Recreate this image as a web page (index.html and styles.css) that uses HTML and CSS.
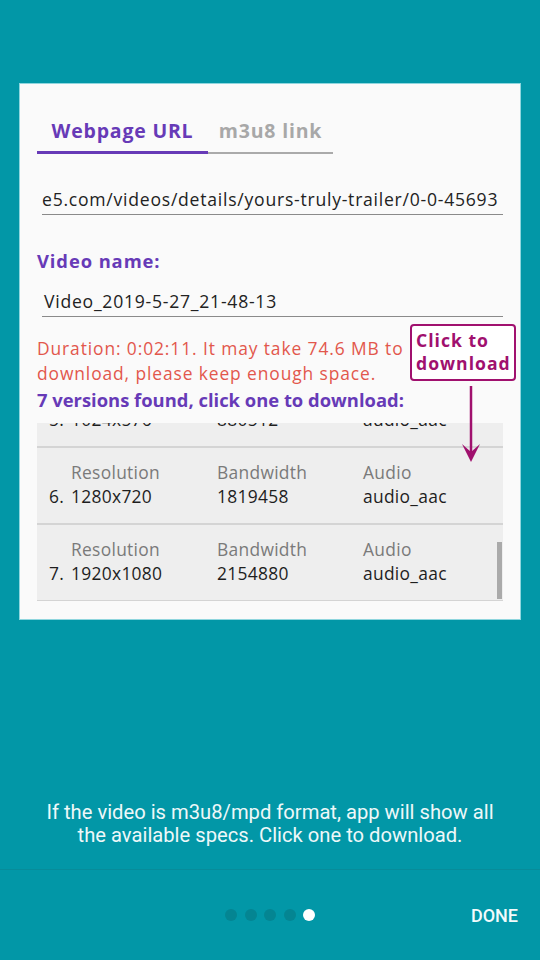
FILE: index.html
```html
<!DOCTYPE html>
<html lang="en">
<head>
  <meta charset="UTF-8">
  <title>Intro - Download specs</title>
  <link rel="stylesheet" href="styles.css">
</head>
<body>
  <div class="stage">
    <div class="shot">
      <!-- Tabs -->
      <div class="tabs">
        <div class="tab active">Webpage URL</div>
        <div class="tab">m3u8 link</div>
      </div>

      <div class="field url">e5.com/videos/details/yours-truly-trailer/0-0-45693</div>

      <div class="label">Video name:</div>
      <div class="field name">Video_2019-5-27_21-48-13</div>

      <div class="warn">Duration: 0:02:11. It may take 74.6 MB to<br>download, please keep enough space.</div>
      <div class="found">7 versions found, click one to download:</div>

      <!-- Versions list, scrolled to the bottom -->
      <div class="list">
        <div class="rows">
          <div class="row partial">
            <span>5.</span><span>1024x576</span><span>880512</span><span>audio_aac</span>
          </div>
          <div class="row">
            <span></span><span class="cap">Resolution</span><span class="cap">Bandwidth</span><span class="cap">Audio</span>
            <span>6.</span><span>1280x720</span><span>1819458</span><span>audio_aac</span>
          </div>
          <div class="row">
            <span></span><span class="cap">Resolution</span><span class="cap">Bandwidth</span><span class="cap">Audio</span>
            <span>7.</span><span>1920x1080</span><span>2154880</span><span>audio_aac</span>
          </div>
        </div>
        <div class="scrollbar"></div>
      </div>

      <!-- Hint bubble -->
      <div class="hint">Click to<br>download</div>
      <svg class="arrow" width="20" height="80" viewBox="0 0 20 80">
        <line x1="10" y1="0" x2="10" y2="70" stroke="#a0106e" stroke-width="2.5"/>
        <path d="M1 58 L10 66 L19 58 L10 76 Z" fill="#a0106e"/>
      </svg>
    </div>
  </div>

  <p class="intro">If the video is m3u8/mpd format, app will show all<br>the available specs. Click one to download.</p>

  <div class="footer">
    <div class="dots">
      <span class="dot"></span>
      <span class="dot"></span>
      <span class="dot"></span>
      <span class="dot"></span>
      <span class="dot on"></span>
    </div>
    <div class="done">DONE</div>
  </div>
</body>
</html>
```

FILE: styles.css
```css
body {
  margin: 0;
  height: 960px;
  background: #0297a7;
  font-family: "Open Sans", sans-serif;
  display: flex;
  flex-direction: column;
  overflow: hidden;
}

.stage {
  padding: 84px 20px 0;
}

.shot {
  position: relative;
  height: 535px;
  background: #fafafa;
  box-shadow: 0 0 0 1px #8fd6de;
  padding: 0 17px;
  box-sizing: border-box;
}

.tabs {
  display: flex;
}

.tab {
  text-align: center;
  font-size: 19.5px;
  font-weight: 700;
  letter-spacing: 0.8px;
  color: #a8a8a8;
  padding: 32px 0 6px;
  border-bottom: 2px solid #aaaaaa;
  width: 125px;
  line-height: 30px;
}

.tab.active {
  width: 171px;
  color: #673ab7;
  border-bottom: 3px solid #673ab7;
  padding-bottom: 5px;
}

.field {
  margin-left: 5px;
  border-bottom: 1.5px solid #8a8a8a;
  font-size: 17.6px;
  letter-spacing: 0.75px;
  color: #222;
  line-height: 26px;
  padding-bottom: 2px;
}

.url {
  margin-top: 32px;
}

.name {
  margin-top: 14px;
  padding-left: 2px;
}

.label, .found {
  font-size: 18.4px;
  font-weight: 700;
  color: #673ab7;
  line-height: 26px;
}

.label {
  margin-top: 33px;
  letter-spacing: 0.9px;
}

.warn {
  margin-top: 19px;
  font-size: 17.4px;
  letter-spacing: 0.9px;
  color: #e2574c;
  line-height: 25px;
}

.found {
  margin-top: 1px;
}

.list {
  position: relative;
  margin-top: 10px;
  height: 178px;
  overflow: hidden;
}

.rows {
  margin-top: -16px;
}

.row {
  display: grid;
  grid-template-columns: 22px 146px 146px 1fr;
  padding: 12px 12px 14px;
  background: #eeeeee;
  border-bottom: 2px solid #d4d4d4;
  font-size: 17.4px;
  letter-spacing: 0.3px;
  line-height: 24.5px;
  color: #1e1e1e;
}

.row.partial {
  padding-top: 0;
}

.row .cap {
  color: #7a7a7a;
}

.scrollbar {
  position: absolute;
  right: 1px;
  bottom: 2px;
  width: 5px;
  height: 57px;
  background: #aaaaaa;
}

.hint {
  position: absolute;
  left: 390px;
  top: 240px;
  padding: 3px 3px 4px 4px;
  border: 2px solid #a0106e;
  border-radius: 4px;
  background: #fff;
  color: #a0106e;
  font-size: 17.6px;
  font-weight: 700;
  letter-spacing: 1px;
  line-height: 23px;
}

.arrow {
  position: absolute;
  left: 441px;
  top: 302px;
}

.intro {
  margin: auto 0 0;
  padding: 0 10px 22px;
  text-align: center;
  font-family: Roboto, sans-serif;
  font-size: 20.2px;
  line-height: 23px;
  color: #eef8f9;
}

.footer {
  height: 90px;
  border-top: 1px solid #078c9a;
  display: flex;
  align-items: center;
  justify-content: center;
  position: relative;
}

.dots {
  display: flex;
  gap: 7.5px;
}

.dot {
  width: 12px;
  height: 12px;
  border-radius: 50%;
  background: #048592;
}

.dot.on {
  background: #fff;
}

.done {
  position: absolute;
  right: 22px;
  font-family: Roboto, sans-serif;
  font-weight: 500;
  font-size: 18px;
  color: #f2fbfc;
}
```
